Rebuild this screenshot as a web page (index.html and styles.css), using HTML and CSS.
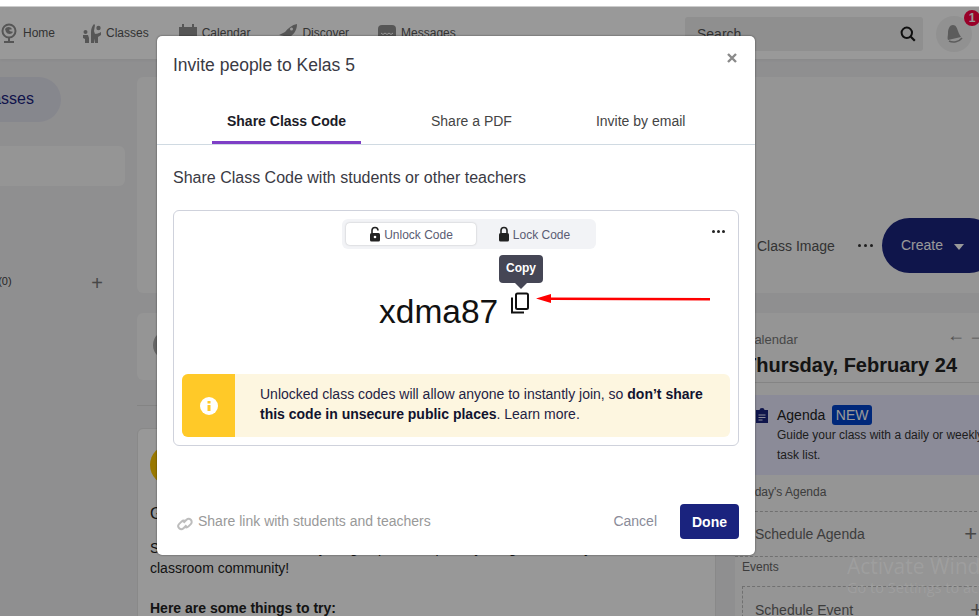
FILE: index.html
```html
<!DOCTYPE html>
<html lang="en">
<head>
<meta charset="utf-8">
<title>Invite people to Kelas 5</title>
<link rel="stylesheet" href="styles.css">
</head>
<body>
<div class="strip"></div>
<div class="app">
  <header class="topbar">
    <nav class="nav">
      <a class="nav-item nav-home"><svg class="nav-ico" viewBox="0 0 18 20"><circle cx="9" cy="8" r="6.500" fill="none" stroke="#909090" stroke-width="2"/><path d="M5 6a4 4 0 0 1 7 0c-1 1-2 0-3 1 1 2 3 1 4 2a4 4 0 0 1-7 0z" fill="#909090"/><path d="M4 18h10v2H4zM8 15h2v3H8z" fill="#909090"/></svg>Home</a>
      <a class="nav-item nav-classes"><svg class="nav-ico" viewBox="0 0 18 20"><circle cx="2.500" cy="9" r="2" fill="#909090"/><path d="M0 12h5l1 3v5H2v-4l-2-1zM8 9c0-3 1-6 3-8l1 1-1 6 1 3-1 9H8zM11 11c2 0 6-1 7-2v3l-3 2v6h-3z" fill="#909090"/><circle cx="15.500" cy="5" r="2.200" fill="#909090"/></svg>Classes</a>
      <a class="nav-item nav-calendar"><svg class="nav-ico" viewBox="0 0 18 20"><path d="M0 4h3V1h2v3h8V1h2v3h3v15H0z" fill="#909090"/></svg>Calendar</a>
      <a class="nav-item nav-discover"><svg class="nav-ico" viewBox="0 0 18 20"><path d="M18 1c0 6-3 10-7 13l-1 4-3-3-2-2-5-1 6-3c3-4 7-7 12-8z" fill="#909090"/><circle cx="12.500" cy="6" r="1.500" fill="#fff"/></svg>Discover</a>
      <a class="nav-item nav-messages"><svg class="nav-ico" viewBox="0 0 18 20"><rect x="0" y="2" width="18" height="15" rx="4" fill="#909090"/><path d="M3 10l2 1.500 2-1.500 2 1.500 2-1.500 2 1.500 2-1.500" fill="none" stroke="#fff" stroke-width="1"/></svg>Messages</a>
    </nav>
    <div class="search">
      <span class="search-text">Search</span>
      <svg class="search-ico" viewBox="0 0 16 16"><circle cx="6.800" cy="6.800" r="5.200" fill="none" stroke="#1a1a1a" stroke-width="2"/><path d="M10.800 10.800l4 4" stroke="#1a1a1a" stroke-width="2.200"/></svg>
    </div>
    <div class="bell">
      <svg class="bell-ico" viewBox="0 0 20 20"><path d="M9 1c3 0 4 3 5 6 1 3 2 4 3 6L4 16c-1-2 0-4 0-7 0-3 1-8 5-8z" fill="#9a9a9a"/><path d="M5 17c4 2 10 1 13-3" fill="none" stroke="#9a9a9a" stroke-width="1.500"/></svg>
      <span class="badge">1</span>
    </div>
  </header>
  <div class="columns">
    <aside class="side">
      <div class="pill">My Classes</div>
      <div class="side-box"></div>
      <div class="side-row"><span class="side-label">Groups (0)</span><span class="side-plus">+</span></div>
    </aside>
    <main class="main">
      <section class="hero">
        <span class="hero-link">Class Image</span>
        <span class="hero-dots"><i></i><i></i><i></i></span>
        <button class="create">Create<span class="caret"></span></button>
      </section>
      <div class="lower">
        <div class="feed">
          <div class="composer"><span class="avatar-grey"></span></div>
          <div class="rule"></div>
          <article class="post">
            <span class="avatar-yellow"></span>
            <p class="post-line post-head">Get started</p>
            <p class="post-line post-body">Start the conversation with your group and help everyone get to know your<br>classroom community!</p>
            <p class="post-line post-bold">Here are some things to try:</p>
          </article>
        </div>
        <aside class="cal">
          <div class="cal-label">Calendar</div>
          <div class="cal-head"><h2 class="cal-date">Thursday, February 24</h2><span class="cal-arrow">←</span><span class="cal-arrow cal-arrow-next">→</span></div>
          <div class="agenda">
            <svg class="agenda-ico" viewBox="0 0 12 15"><path d="M0 2h3.500a2.500 2 0 0 1 5 0H12v13H0z" fill="#1a237e"/><path d="M2.500 7h7M2.500 9.500h7M2.500 12h4" stroke="#e8e8fd" stroke-width="1"/></svg>
            <div>
              <div class="agenda-title">Agenda <span class="new">NEW</span></div>
              <div class="agenda-text">Guide your class with a daily or weekly<br>task list.</div>
            </div>
          </div>
          <div class="cal-sub">Today's Agenda</div>
          <div class="cal-row"><span>Schedule Agenda</span><span class="cal-plus">+</span></div>
          <div class="cal-sub cal-events">Events</div>
          <div class="cal-row cal-box"><span>Schedule Event</span><span class="cal-plus">+</span></div>
        </aside>
      </div>
    </main>
  </div>
</div>
<div class="backdrop"></div>
<div class="watermark"><div class="wm-1">Activate Windows</div><div class="wm-2">Go to Settings to activate Windows.</div></div>
<div class="modal">
  <div class="modal-head">
    <h1 class="modal-title">Invite people to Kelas 5</h1>
    <svg class="close" viewBox="0 0 10 10"><path d="M1 1l8 8M9 1l-8 8" stroke="#8a8a8a" stroke-width="2.400"/></svg>
  </div>
  <div class="tabs">
    <a class="tab tab-active">Share Class Code</a>
    <a class="tab tab-pdf">Share a PDF</a>
    <a class="tab tab-email">Invite by email</a>
  </div>
  <div class="modal-body">
    <p class="lead">Share Class Code with students or other teachers</p>
    <div class="code-card">
      <div class="card-top">
        <div class="segment">
          <span class="seg seg-on"><svg class="lock" viewBox="0 0 12 16"><path d="M3 7V4.500a3 3 0 0 1 6 0" fill="none" stroke="#222" stroke-width="1.600"/><rect x="1" y="7" width="10" height="8.500" rx="1.500" fill="#222"/><circle cx="6" cy="11" r="1.300" fill="#fff"/></svg>Unlock Code</span>
          <span class="seg seg-off"><svg class="lock" viewBox="0 0 12 16"><path d="M3 7V4.500a3 3 0 0 1 6 0V7" fill="none" stroke="#222" stroke-width="1.600"/><rect x="1" y="7" width="10" height="8.500" rx="1.500" fill="#222"/></svg>Lock Code</span>
        </div>
        <span class="card-dots"><i></i><i></i><i></i></span>
      </div>
      <div class="code-wrap">
        <div class="tooltip">Copy</div>
        <div class="code-line">
          <span class="code">xdma87</span>
          <svg class="copy" viewBox="0 0 18 22"><path d="M1 5.500V20.500H13" fill="none" stroke="#111" stroke-width="2"/><rect x="5" y="1.500" width="12" height="15.500" rx="1.500" fill="none" stroke="#111" stroke-width="2"/></svg>
        </div>
      </div>
      <div class="notice">
        <div class="notice-side"><svg class="info" viewBox="0 0 18 18"><circle cx="9" cy="9" r="9" fill="#fff"/><path d="M7.500 8h3v6h-3z M7.500 4h3v2.500h-3z" fill="#ffc928"/></svg></div>
        <p class="notice-text">Unlocked class codes will allow anyone to instantly join, so <b>don’t share this code in unsecure public places</b>. Learn more.</p>
      </div>
    </div>
  </div>
  <div class="modal-foot">
    <span class="share-link"><svg class="link-ico" viewBox="0 0 16 16"><path d="M6.500 6.800L9.500 3.800a3 3 0 0 1 4.300 4.300L11.500 10.400a3 3 0 0 1-4.200 0M9.500 9.200L6.500 12.200a3 3 0 0 1-4.300-4.300L4.500 5.600a3 3 0 0 1 4.200 0" fill="none" stroke="#bdbdbd" stroke-width="2"/></svg>Share link with students and teachers</span>
    <span class="cancel">Cancel</span>
    <button class="done">Done</button>
  </div>
</div>
<svg class="red-arrow" viewBox="0 0 176 10"><path d="M0 4.500L15 0V3.500L174 4V6.500L15 6V9Z" fill="#f00"/></svg>
</body>
</html>
```
FILE: styles.css
```css
* { box-sizing: border-box; }
html, body { margin: 0; height: 616px; overflow: hidden; }
body { position: relative; width: 979px; background: #eeeef0; font-family: "Liberation Sans", Arial, sans-serif; color: #222; }
p, h1, h2 { margin: 0; }

.strip { height: 7px; background: #fff; border-bottom: 1px solid #ccc; position: relative; z-index: 1; }
.app { height: 609px; overflow: hidden; }

.topbar { height: 52px; background: #fff; display: flex; align-items: center; box-shadow: 0 1px 3px rgba(0,0,0,.05); position: relative; }
.nav { display: flex; align-items: center; width: 685px; color: #555; font-size: 12px; }
.nav-item { display: flex; align-items: center; gap: 5px; white-space: nowrap; }
.nav-ico { width: 18px; height: 20px; flex: none; }
.nav-classes { margin-left: 28px; }
.nav-calendar { margin-left: 30px; }
.nav-discover { margin-left: 29px; }
.nav-messages { margin-left: 29px; }
.search { width: 238px; height: 34px; margin-top: 1px; border-radius: 3px; background: #eeeeee; display: flex; align-items: center; justify-content: space-between; padding: 0 7px 0 12px; font-size: 14px; color: #555; }
.search-ico { width: 16px; height: 16px; }
.bell { position: relative; width: 36px; height: 36px; margin-left: 13px; margin-top: 1px; border-radius: 50%; background: #f2f2f2; display: flex; align-items: center; justify-content: center; }
.bell-ico { width: 20px; height: 20px; }
.badge { position: absolute; left: 28px; top: -6px; width: 16px; height: 16px; border-radius: 50%; background: #ff0044; color: #fff; font-size: 12px; font-weight: bold; line-height: 16px; text-align: center; }

.columns { display: flex; padding: 18px 0 0; height: 557px; }
.side { width: 125px; margin-right: 12px; flex: none; }
.pill { width: 141px; height: 45px; margin-left: -80px; padding-right: 27px; border-radius: 0 23px 23px 0; background: #e0e1ec; color: #1a237e; font-size: 16px; line-height: 44px; text-align: right; white-space: nowrap; }
.side-box { height: 40px; margin-top: 24px; border-radius: 0 6px 6px 0; background: #f8f8f8; }
.side-row { margin: 87px 0 0 -41px; display: flex; align-items: center; justify-content: space-between; width: 144px; font-size: 11px; color: #444; white-space: nowrap; }
.side-label { margin-top: -4px; }
.side-plus { font-size: 20px; line-height: 20px; color: #777; }

.main { width: 870px; flex: none; }
.hero { height: 216px; border-radius: 6px; background: #f8f8f8; display: flex; align-items: flex-end; padding-bottom: 20px; padding-left: 620px; }
.hero-link { width: 101px; height: 55px; font-size: 14px; line-height: 56px; color: #555; white-space: nowrap; }
.hero-dots { width: 24px; height: 55px; display: flex; align-items: center; gap: 3px; }
.hero-dots i { width: 3px; height: 3px; border-radius: 50%; background: #333; }
.create { width: 115px; height: 55px; flex: none; border: 0; border-radius: 28px; background: #1a237e; color: #fff; font: 14px "Liberation Sans", Arial, sans-serif; text-align: left; padding: 0 0 1px 19px; display: flex; align-items: center; }
.caret { margin: 3px 0 0 11px; border: 5.500px solid transparent; border-top: 6px solid #fff; border-bottom: 0; }

.lower { display: flex; gap: 19px; margin-top: 20px; }
.feed { width: 579px; flex: none; }
.composer { height: 67px; border-radius: 6px; background: #f8f8f8; padding: 17px 16px; }
.avatar-grey { display: block; width: 30px; height: 30px; border-radius: 50%; background: #aaa; }
.rule { height: 1px; margin: 25px 0 22px; background: #ddd; }
.post { height: 240px; border-radius: 6px; background: #fdfdfd; border: 1px solid #e4e4e4; padding: 16px 12px; }
.avatar-yellow { display: block; width: 40px; height: 40px; border-radius: 50%; background: #ffc800; }
.post-line { font-size: 14px; line-height: 20px; color: #222; }
.post-head { margin-top: 19px; font-size: 16px; }
.post-body { margin-top: 14px; }
.post-bold { margin-top: 20px; font-weight: bold; }

.cal { width: 272px; flex: none; height: 303px; background: #f8f8f8; padding: 19px 0 0 10px; position: relative; }
.cal-label { font-size: 13px; line-height: 15px; color: #777; }
.cal-head { display: flex; align-items: baseline; border-bottom: 1px solid #ddd; height: 36px; margin-left: -10px; padding: 6px 0 0 9px; position: relative; }
.cal-date { font-size: 20px; line-height: 24px; font-weight: bold; color: #222; white-space: nowrap; }
.cal-arrow { position: absolute; left: 212px; top: -22px; font-size: 18px; color: #888; }
.cal-arrow-next { left: 233px; }
.agenda { display: flex; gap: 9px; margin: 12px 0 0 -10px; height: 80px; background: #e8e8fd; padding: 10px 0 0 21px; width: 272px; }
.agenda-ico { width: 12px; height: 15px; flex: none; margin-top: 3px; }
.agenda-title { font-size: 14px; line-height: 20px; color: #222; white-space: nowrap; }
.new { display: inline-block; width: 40px; height: 20px; margin-left: 3px; border-radius: 3px; background: #0044cc; color: #fff; text-align: center; line-height: 20px; }
.agenda-text { font-size: 12px; line-height: 20px; color: #333; white-space: nowrap; }
.cal-sub { font-size: 12px; line-height: 14px; margin: 10px 0 0 -3px; color: #666; white-space: nowrap; }
.cal-row { display: flex; justify-content: space-between; align-items: center; width: 262px; height: 46px; margin: 12px 0 0 -10px; border-top: 1px dashed #bbb; border-bottom: 1px dashed #bbb; font-size: 14px; color: #666; padding: 0 37px 0 20px; }
.cal-plus { font-size: 22px; color: #777; margin-right: -17px; line-height: 20px; }
.cal-events { margin-top: 3px; }
.cal-box { border: 1px dashed #bbb; border-bottom: 0; margin: 12px 0 0 -3px; padding-left: 12px; width: 255px; padding-right: 30px; }

.backdrop { position: absolute; inset: 0; background: rgba(0,0,0,.4); }
.watermark { position: absolute; left: 847px; top: 554px; color: rgba(255,255,255,.1); font-family: "Open Sans", sans-serif; white-space: nowrap; }
.wm-1 { font-size: 21px; line-height: 24px; }
.wm-2 { font-size: 14.500px; line-height: 20px; }

.modal { position: absolute; left: 157px; top: 36px; width: 598px; height: 519px; border-radius: 5px; background: #fff; box-shadow: 0 0 2px rgba(0,0,0,.6); display: flex; flex-direction: column; }
.modal-head { display: flex; justify-content: space-between; padding: 19px 18px 0 16px; height: 68px; }
.modal-title { font-size: 17.500px; line-height: 20px; font-weight: normal; color: #3a3a44; }
.close { width: 10px; height: 10px; margin-top: -2px; }
.tabs { display: flex; height: 41px; border-bottom: 1px solid #d0dae2; padding-left: 55px; font-size: 14px; color: #444; }
.tab { height: 40px; line-height: 34px; text-align: center; white-space: nowrap; }
.tab-active { width: 149px; font-weight: bold; color: #1c1c28; border-bottom: 3px solid #7e3fc6; }
.tab-pdf { margin-left: 70px; }
.tab-email { margin-left: 84px; }
.modal-body { padding: 24px 16px 0; flex: 1; }
.lead { font-size: 16px; line-height: 18px; color: #3a3a44; }
.code-card { height: 236px; margin-top: 23px; border: 1px solid #cfd2dc; border-radius: 6px; position: relative; padding: 8px 8px 0; }
.card-top { display: flex; justify-content: center; }
.segment { width: 254px; height: 30px; margin-left: 26px; padding: 4px; border-radius: 6px; background: #f2f3f6; display: flex; font-size: 12px; color: #5a5c73; }
.seg { display: flex; align-items: center; justify-content: center; gap: 3px; padding-top: 1px; white-space: nowrap; }
.seg-on { width: 130px; flex: none; background: #fff; border-radius: 4px; box-shadow: 0 0 2px rgba(0,0,0,.25); }
.seg-off { flex: 1; }
.lock { width: 12px; height: 16px; margin-top: -2px; }
.card-dots { position: absolute; right: 13px; top: 19px; display: flex; gap: 2px; }
.card-dots i { width: 3px; height: 3px; border-radius: 50%; background: #222; }
.code-wrap { height: 125px; position: relative; }
.tooltip { position: absolute; left: 317px; top: 6px; width: 44px; height: 28px; border-radius: 4px; background: #454655; color: #fff; font-size: 12px; font-weight: bold; line-height: 27px; text-align: center; }
.tooltip::after { content: ""; position: absolute; left: 16px; top: 28px; border: 6px solid transparent; border-top-color: #454655; border-bottom: 0; }
.code-line { position: absolute; left: 197px; top: 40px; display: flex; align-items: flex-start; gap: 13px; }
.code { font-size: 33.500px; line-height: 44px; color: #111; margin-top: 1px; }
.copy { width: 18px; height: 22px; margin-top: 3px; }
.notice { display: flex; height: 63px; border-radius: 6px; overflow: hidden; background: #fdf6e0; }
.notice-side { width: 53px; flex: none; background: #ffc928; display: flex; align-items: center; justify-content: center; }
.info { width: 18px; height: 18px; }
.notice-text { padding: 10px 20px 0 25px; font-size: 14px; line-height: 20px; color: #1f2344; }
.notice-text b { color: #11132e; }
.modal-foot { display: flex; align-items: center; height: 35px; margin-bottom: 16px; padding: 0 16px 0 20px; font-size: 14px; }
.share-link { display: flex; align-items: center; gap: 5px; color: #999; flex: 1; padding-bottom: 2px; }
.link-ico { width: 16px; height: 16px; margin-top: 6px; }
.cancel { color: #8b8c99; margin-right: 23px; padding-bottom: 1px; }
.done { width: 59px; height: 35px; border: 0; border-radius: 4px; background: #1a237e; color: #fff; font: bold 14px "Liberation Sans", Arial, sans-serif; }
.red-arrow { position: absolute; left: 536px; top: 294px; width: 176px; height: 10px; }
```
